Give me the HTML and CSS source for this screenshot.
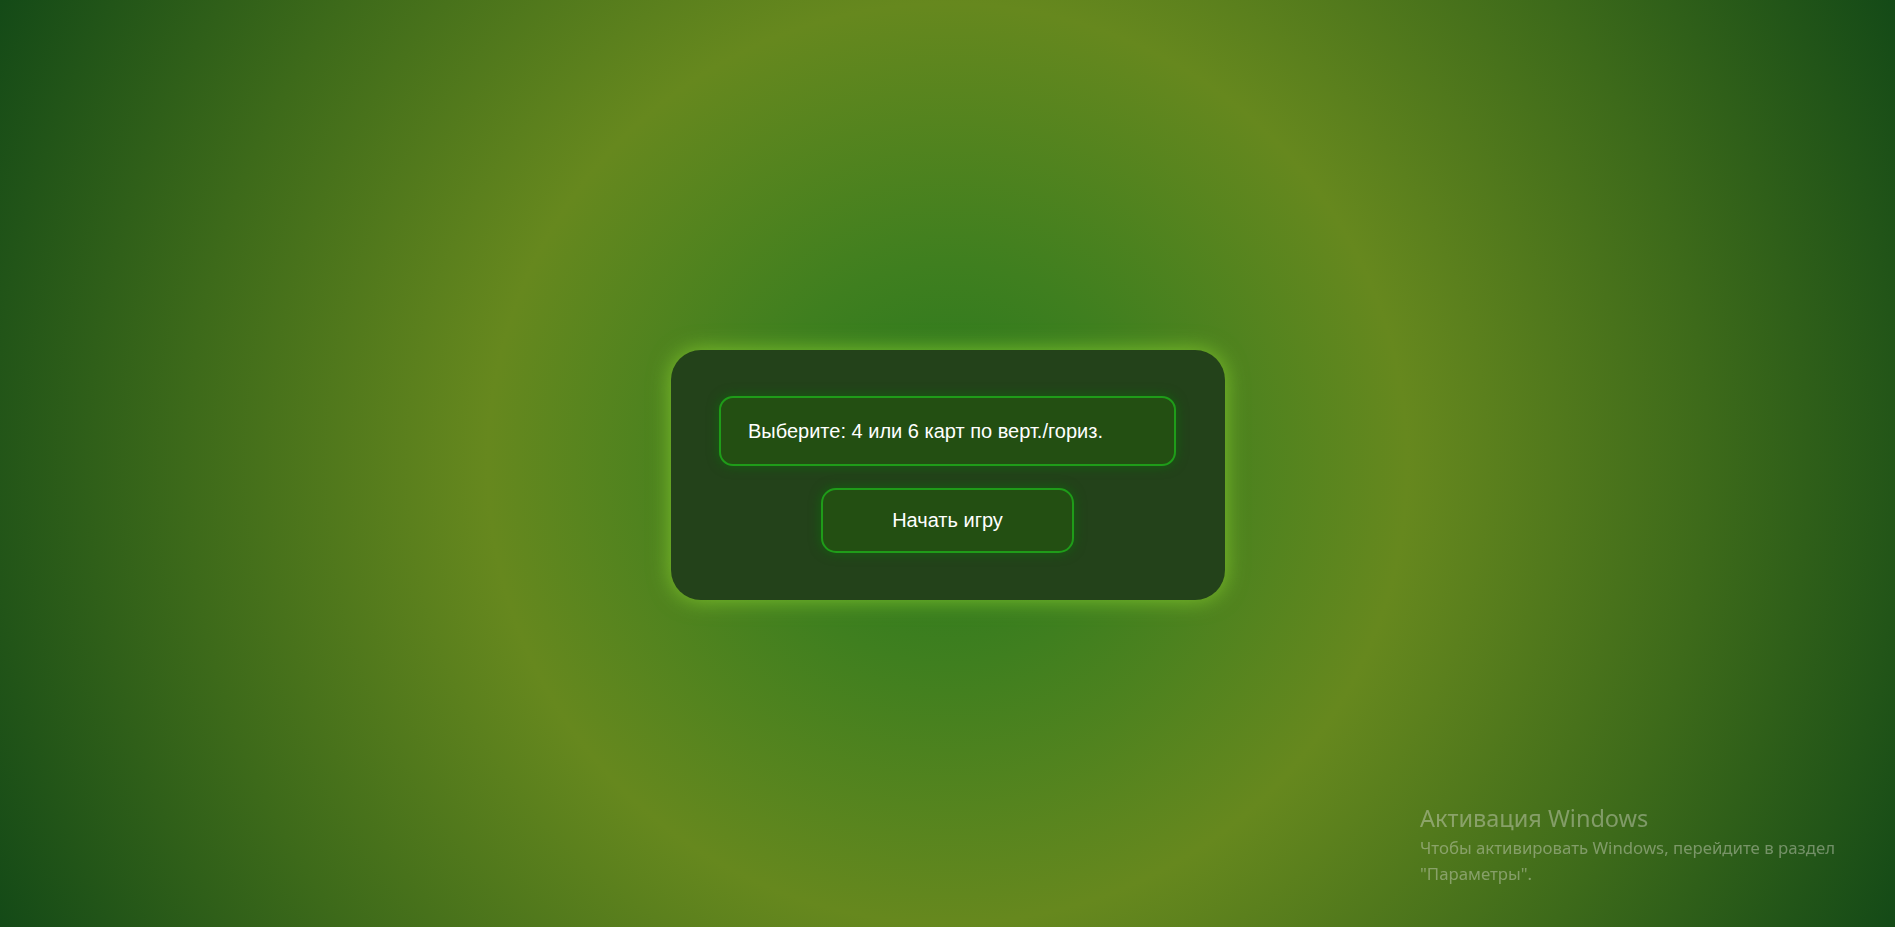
FILE: index.html
```html
<!DOCTYPE html>
<html lang="ru">
<head>
<meta charset="utf-8">
<title>Игра</title>
<link rel="stylesheet" href="styles.css">
</head>
<body>
<main class="stage">
  <section class="panel">
    <div class="prompt">Выберите: 4 или 6 карт по верт./гориз.</div>
    <button class="start">Начать игру</button>
  </section>
</main>
<div class="activation">
  <div class="activation-title">Активация Windows</div>
  <div class="activation-text">Чтобы активировать Windows, перейдите в раздел<br>"Параметры".</div>
</div>
</body>
</html>
```
FILE: styles.css
```css
html, body {
  margin: 0;
  padding: 0;
  height: 100%;
}

body {
  background: radial-gradient(circle at 50% 50%, #26771e 0px, #3f7f1f 200px, #66881e 460px, #3d6a1a 760px, #144a17 1054px);
  font-family: "Liberation Sans", Arial, sans-serif;
  overflow: hidden;
}

.stage {
  box-sizing: border-box;
  height: 100vh;
  padding-top: 23px;
  display: flex;
  align-items: center;
  justify-content: center;
}

.panel {
  box-sizing: border-box;
  width: 554px;
  height: 250px;
  padding: 46px 48px 47px;
  background: #23421a;
  border-radius: 30px;
  box-shadow: 0 0 22px rgba(135, 205, 45, 0.85);
  display: flex;
  flex-direction: column;
  align-items: center;
  gap: 22px;
}

.prompt {
  box-sizing: border-box;
  width: 457px;
  height: 70px;
  padding: 0 27px;
  display: flex;
  align-items: center;
  background: #234f12;
  border: 2px solid #1f9c19;
  border-radius: 14px;
  box-shadow: 0 0 12px rgba(10, 120, 10, 0.55);
  color: #ffffff;
  font-size: 20px;
}

.start {
  box-sizing: border-box;
  width: 253px;
  height: 65px;
  background: #234f12;
  border: 2px solid #1f9c19;
  border-radius: 15px;
  box-shadow: 0 0 12px rgba(10, 120, 10, 0.55);
  color: #ffffff;
  font-family: "Liberation Sans", Arial, sans-serif;
  font-size: 20px;
  cursor: pointer;
}

.activation {
  position: fixed;
  left: 1420px;
  top: 801px;
  color: rgba(210, 215, 200, 0.45);
  font-family: "Noto Sans", "Open Sans", sans-serif;
}

.activation-title {
  font-size: 23.5px;
  line-height: 34px;
}

.activation-text {
  font-size: 16.8px;
  line-height: 26px;
}
```
